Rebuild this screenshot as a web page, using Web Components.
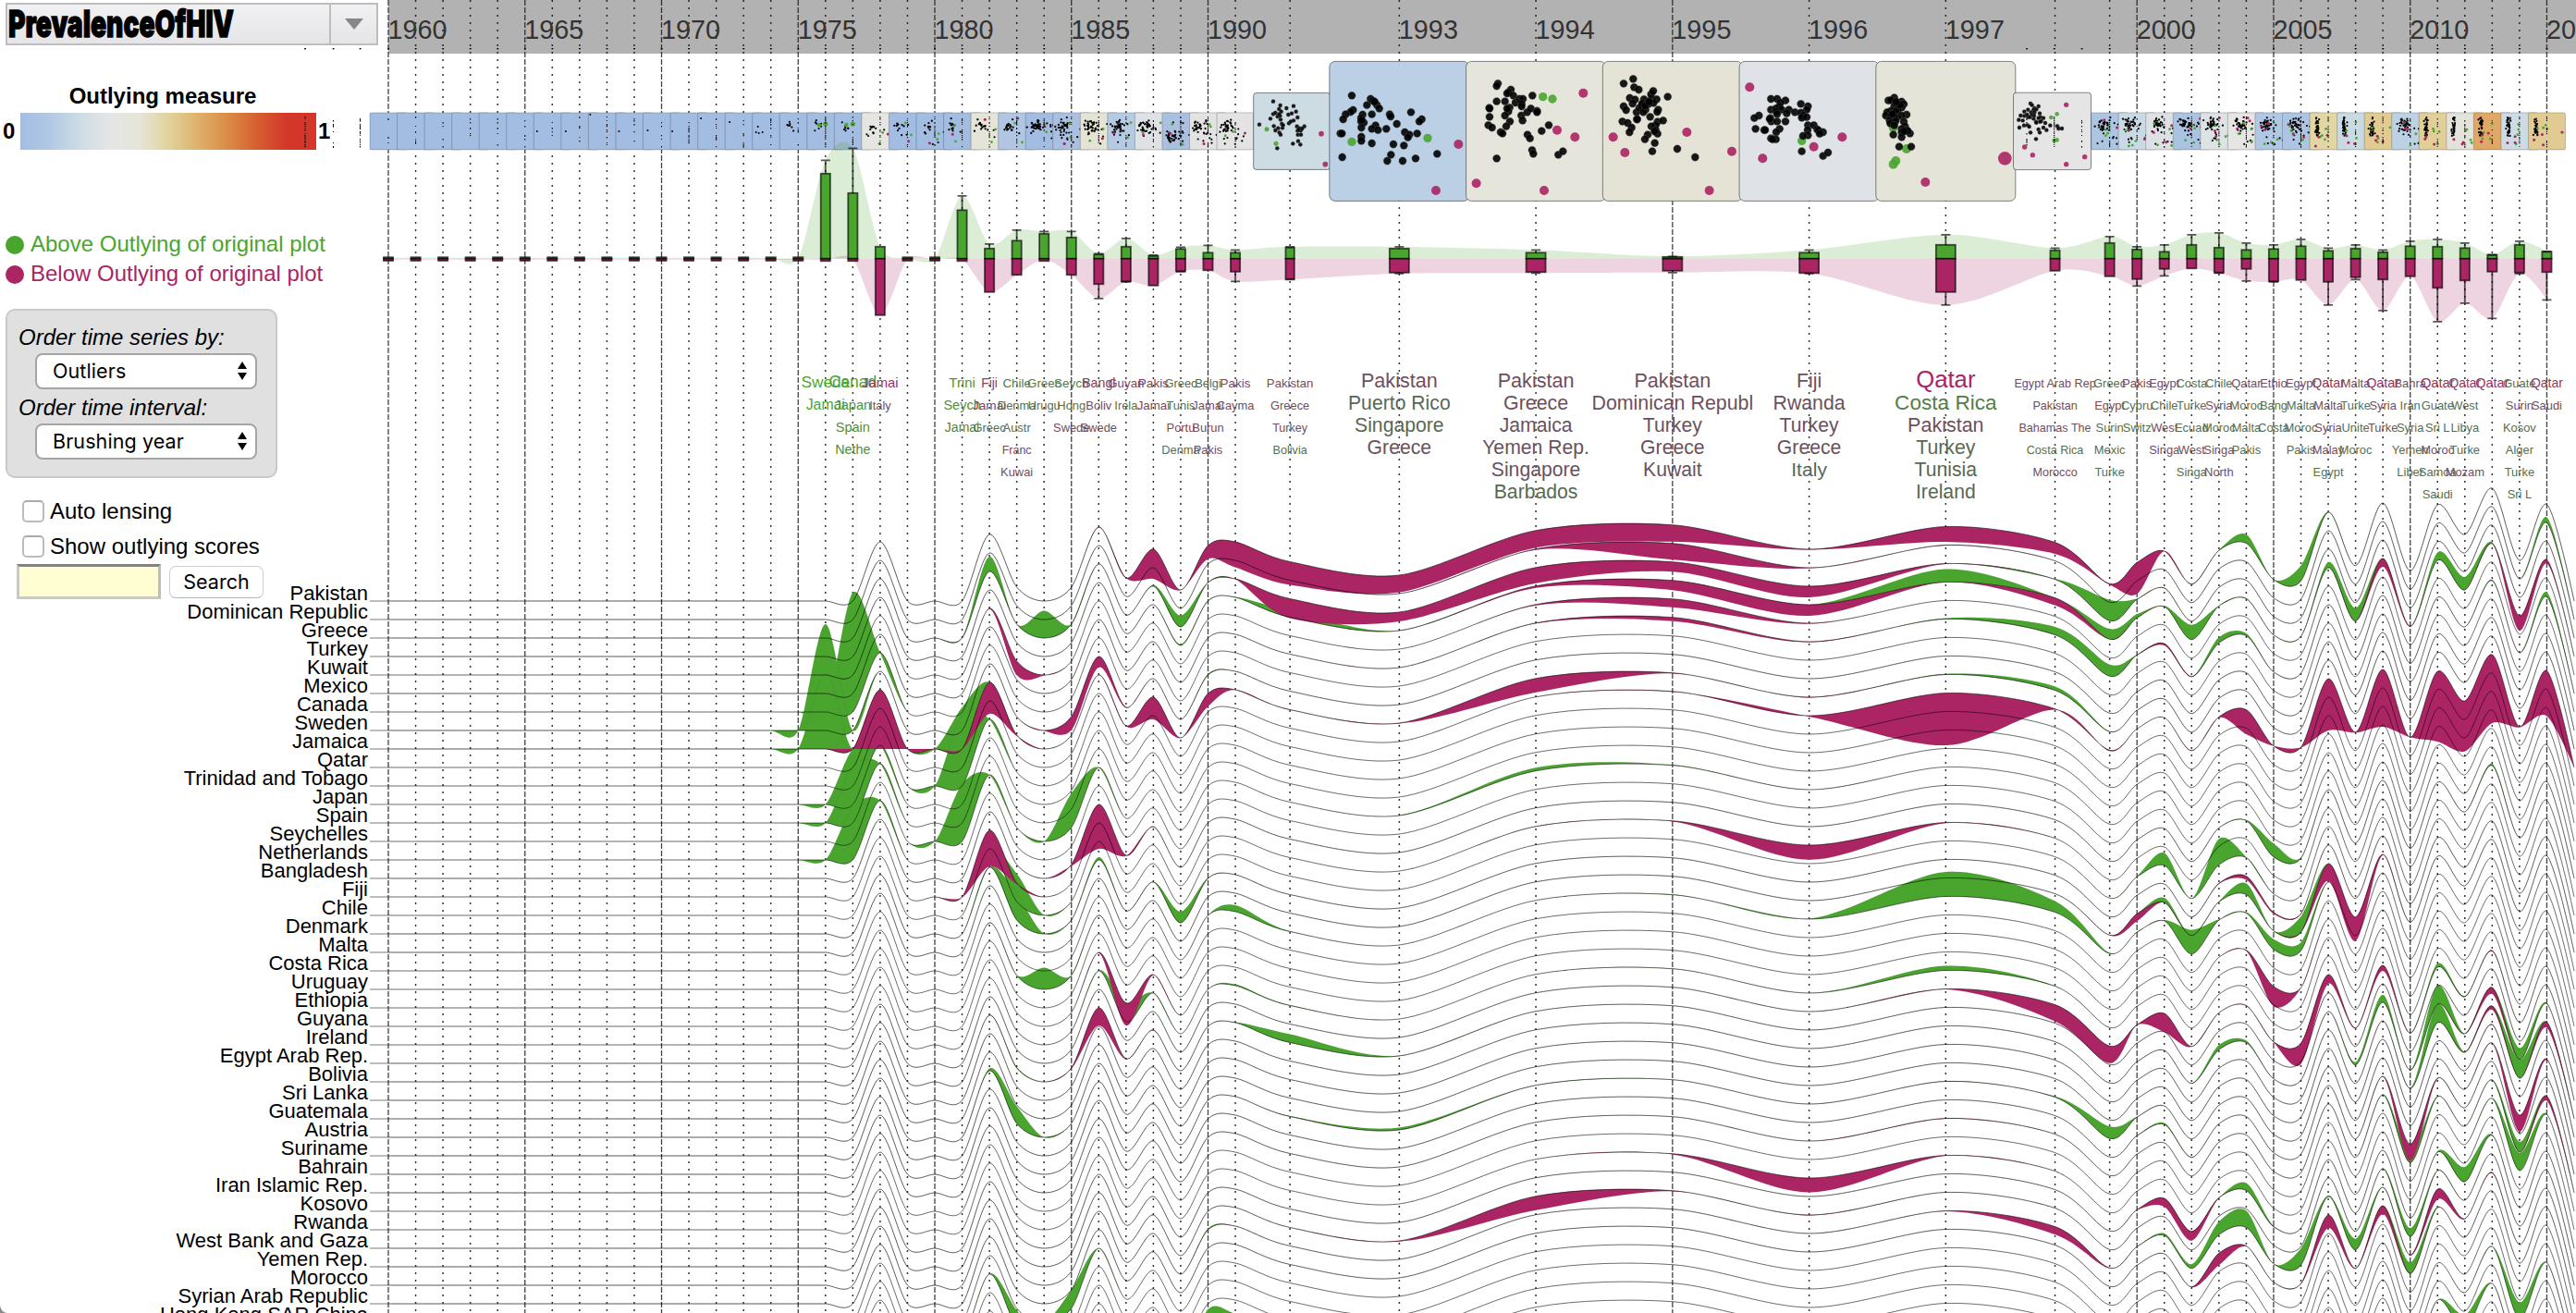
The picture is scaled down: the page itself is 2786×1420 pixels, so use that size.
<!DOCTYPE html>
<html lang="en">
<head>
<meta charset="utf-8">
<title>PrevalenceOfHIV</title>
<style>
html,body{margin:0;padding:0;background:#fff}
body{width:2786px;height:1420px;overflow:hidden;font-family:"Liberation Sans",Arial,sans-serif;color:#000}
</style>
</head>
<body>
<outlier-app></outlier-app>
<script>
const GREEN='#4aa52f', MAG='#ab2463';
const define=(name,css,html,init)=>{
  const t=document.createElement('template');
  t.innerHTML=`<style>:host{display:block;box-sizing:border-box}*{box-sizing:border-box}${css}</style>${html}`;
  customElements.define(name,class extends HTMLElement{
    constructor(){super();this.attachShadow({mode:'open'}).append(t.content.cloneNode(true));}
    connectedCallback(){if(init)init.call(this,this.shadowRoot);}
  });
};

/* ---------- side panel controls ---------- */
define('data-picker',`
:host{width:403px;height:46px}
.box{display:flex;height:46px;border:2px solid #bdbdbd;background:linear-gradient(#f1f1f3,#e5e5e7)}
.name{flex:1;overflow:visible}
.arrow{width:51px;border-left:2px solid #bdbdbd;display:flex;align-items:center;justify-content:center}
svg{display:block}`,
`<div class="box"><svg class="name" width="348" height="42"><text x="1" y="35.2" font-family="Inter,'Liberation Sans',sans-serif" font-weight="900" font-size="40" textLength="244" lengthAdjust="spacingAndGlyphs" stroke="#000" stroke-width="1.3">PrevalenceOfHIV</text></svg>
<div class="arrow"><svg width="22" height="14"><path d="M1 1H21L11 13Z" fill="#878787"/></svg></div></div>`);

define('color-legend',`
:host{font-weight:bold;font-size:24px;line-height:28px}
.t{width:352px;text-align:center}
.r{display:flex;align-items:center;height:40px;margin-top:4px}
.a{width:22px;padding-left:3px}
.b{width:320px;height:40px;background:linear-gradient(90deg,#a3bde2,#b2c9e4 10%,#ccdce4 20%,#e5e5e6 30%,#e5e5da 40%,#e2d39c 50%,#deb16c 60%,#da8c47 70%,#d65f31 80%,#d4372a 90%,#d4372a)}
.c{padding-left:2px}`,
`<div class="t"><slot></slot></div><div class="r"><span class="a">0</span><span class="b"></span><span class="c">1</span></div>`);

define('legend-item',`
:host{display:flex;align-items:center;height:32px;font-size:24px;line-height:28px}
i{width:20px;height:20px;border-radius:50%;background:currentColor;margin:0 7px 3px 6px}
span{margin-bottom:4px}`,
`<i></i><span><slot></slot></span>`);

define('select-field',`
:host{font-size:24px}
.l{font-style:italic;line-height:28px;padding-left:12px}
.s{margin:3px 0 0 30px;width:240px;height:39px;border:2px solid #a5a5a5;border-radius:8px;background:#fff;display:flex;align-items:center;justify-content:space-between;padding:0 9px 1px 17px;font-family:Inter,"Liberation Sans",sans-serif;font-size:21.5px;letter-spacing:.1px}`,
`<div class="l"><slot></slot></div><div class="s"><span class="v"></span><svg width="10" height="20"><path d="M5 0L10 8H0ZM5 20L10 12H0Z"/></svg></div>`,
function(r){r.querySelector('.v').textContent=this.getAttribute('value');});

define('option-panel',`
:host{width:294px;height:183px;border:2px solid #c9c9c9;border-radius:10px;background:#e0e0e0;padding-top:15px;display:flex;flex-direction:column;gap:6px}`,`<slot></slot>`);

define('check-option',`
:host{display:flex;align-items:center;height:28px;font-size:24px;line-height:28px;padding-left:24px;gap:6px}
i{width:24px;height:24px;border:2px solid #bcbcbc;border-top-color:#a9a9a9;border-radius:5px;background:#fff}`,`<i></i><slot></slot>`);

define('search-form',`
:host{display:flex;height:38px;padding-left:18px;gap:9px;align-items:center}
.i{width:156px;height:38px;background:#fffdd1;border:3px solid #c9c9c9;border-top-color:#828282;border-right-color:#bdbdbd}
.b{width:102px;height:35px;border:1.5px solid #cfcfcf;border-bottom-color:#b5b5b5;border-radius:7px;background:#fff;display:flex;align-items:center;justify-content:center;font-family:Inter,"Liberation Sans",sans-serif;font-size:21.5px}`,
`<div class="i"></div><div class="b">Search</div>`);

define('control-side',`
:host{display:flex;flex-direction:column;width:420px}
data-picker{margin:3px 0 0 6px}
color-legend{margin-top:41px}
.g{margin-top:88px}
option-panel{margin:20px 0 0 6px}
.c1{margin-top:22px}.c2{margin-top:10px}
search-form{margin-top:5px}`,
`<data-picker></data-picker><color-legend>Outlying measure</color-legend>
<legend-item class="g" style="color:${GREEN}">Above Outlying of original plot</legend-item>
<legend-item style="color:${MAG}">Below Outlying of original plot</legend-item>
<option-panel><select-field value="Outliers">Order time series by:</select-field><select-field value="Brushing year">Order time interval:</select-field></option-panel>
<check-option class="c1">Auto lensing</check-option><check-option class="c2">Show outlying scores</check-option>
<search-form></search-form>`);

/* ---------- shared scales and helpers ---------- */
const STEP=29.55, YEARS=[];
for(let y=1960;y<=2016;y++)YEARS.push(y);
const unit=y=>y<=1991?y-1960:({1992:33,1993:37,1994:42,1995:47,1996:52,1997:57,1998:61,1999:63})[y]??y-1936;
const X=y=>420+STEP*unit(y);
const f=n=>n.toFixed(2);
/* cardinal spline, tension 0.7 */
const spline=p=>{
  const n=p.length,t=p.map((q,i)=>{const a=p[Math.max(0,i-1)],b=p[Math.min(n-1,i+1)];return i==0||i==n-1?[0,0]:[.15*(b[0]-a[0]),.15*(b[1]-a[1])];});
  let s='';
  for(let i=1;i<n;i++)s+=`C${f(p[i-1][0]+t[i-1][0])},${f(p[i-1][1]+t[i-1][1])} ${f(p[i][0]-t[i][0])},${f(p[i][1]-t[i][1])} ${f(p[i][0])},${f(p[i][1])}`;
  return s;
};
const line=p=>`M${f(p[0][0])},${f(p[0][1])}`+spline(p);
const area=(a,b)=>{const r=b.slice().reverse();return line(a)+`L${f(r[0][0])},${f(r[0][1])}`+spline(r)+'Z';};
let seed=11;
const rnd=()=>{seed=(seed*16807)%2147483647;return seed/2147483647;};
const gauss=()=>(rnd()+rnd()+rnd()+rnd()-2)*1.2;

/* ---------- axis and grid ---------- */
const axis=()=>{
  let s='<rect x="420" y="0" width="2366" height="58" fill="#b2b2b2"/>';
  for(const y of YEARS){
    if(y==2016)continue;
    s+=y%5==0?`<path d="M${f(X(y))} 0V1420" stroke="#111" stroke-width="1.3" stroke-dasharray="6 2" stroke-opacity=".8"/>`
            :`<path d="M${f(X(y))} 0V1420" stroke="#000" stroke-width="1.5" stroke-dasharray="2 6" stroke-opacity=".8"/>`;
  }
  for(const y of [1960,1965,1970,1975,1980,1985,1990,1993,1994,1995,1996,1997,2000,2005,2010,2015])
    s+=`<text x="${f(X(y)-.5)}" y="41.6" font-size="28.8" fill="#333">${y}</text>`;
  return s;
};

/* ---------- thumbnail strip ---------- */
const B='#a3bce2';
const FILL={1978:'#e5e5e2',1982:'#e5e4d8',1983:'#b0c6e2',1985:'#a9c0e2',1986:'#e5e4d4',1987:'#b5cae3',1988:'#dfe2e5',1989:'#aac0e0',1990:'#e3e3e3',1991:'#e3e3e3',1992:'#cddbe3',1993:'#bbd0e4',1994:'#e5e5dc',1995:'#e5e3d5',1996:'#dfe3e7',1997:'#e4e4d9',1998:'#e5e5e5',1999:'#aec5e2',2000:'#cadae5',2001:'#dde1e5',2002:'#aac3e2',2003:'#dde2e4',2004:'#e5e5e3',2005:'#b0c8e4',2006:'#acc5e3',2007:'#e2d6a5',2008:'#cadae3',2009:'#e1cb92',2010:'#bcd1e3',2011:'#e2ce97',2012:'#e3e3dc',2013:'#dfa866',2014:'#cddbe5',2015:'#e1cb92'};
/* lens thumbnails: [origin x, black radius, accent radius, black, green, magenta] in thirds of a pixel */
const LENS={
1992:[1350,6.5,8.5,'81,149 104,162 124,171 147,164 155,182 81,190 88,186 100,174 107,182 72,205 95,198 105,208 130,192 141,188 160,201 103,196 36,224 83,229 109,222 97,236 111,235 88,243 101,250 105,257 132,220 147,211 158,230 166,236 182,230 160,244 170,244 161,257 171,257 162,278 169,289 145,286 94,301 138,214 113,226 100,190 164,240 175,237','60,239 90,286','237,254 250,353'],
1993:[1350,12.5,15,'336,130 397,141 404,147 385,161 417,160 425,172 340,177 332,183 316,191 308,207 371,192 366,203 366,214 375,218 367,234 401,191 459,191 462,198 528,184 563,207 555,214 482,222 413,227 401,238 421,242 448,238 299,253 304,253 508,249 523,257 518,266 548,253 367,264 367,277 401,285 471,288 505,292 305,330 463,322 451,342 501,342 543,334 613,319 410,150 368,210','336,280 582,268','682,288 609,438'],
1994:[1350,12.5,15,'810,91 806,99 852,111 845,119 840,123 860,130 806,149 833,149 867,153 880,141 891,141 887,157 887,165 922,130 782,170 783,172 848,169 844,182 840,172 833,195 783,199 849,214 837,230 886,195 890,211 905,184 917,172 937,180 937,184 779,226 791,234 819,249 825,253 906,257 914,269 952,245 975,226 921,307 925,319 1006,322 1021,311 806,334','956,134 987,141','1087,122 1002,242 1060,265 740,415 960,438'],
1995:[1350,12.5,15,'1249,76 1218,91 1252,103 1267,111 1238,138 1255,143 1218,165 1226,177 1247,156 1260,184 1214,214 1231,219 1244,234 1237,249 1261,207 1269,170 1284,142 1276,165 1289,176 1298,158 1308,142 1307,126 1314,115 1325,142 1315,154 1361,134 1282,184 1304,199 1330,176 1327,183 1262,207 1328,215 1346,211 1322,226 1308,230 1322,242 1328,254 1296,257 1287,272 1319,284 1311,311 1392,303 1450,330 1278,156 1288,163 1300,150 1318,246','','1184,265 1222,315 1423,249 1569,311 1496,438'],
1996:[1770,12.5,15,'436,141 456,141 483,146 467,153 463,165 436,176 452,172 471,176 453,182 494,176 487,188 456,190 434,203 437,214 432,206 456,214 483,214 397,195 382,203 386,238 414,242 417,242 464,238 453,249 436,269 452,272 441,272 533,157 556,165 552,176 514,184 533,186 540,195 536,202 552,200 556,226 575,226 555,242 586,240 590,243 605,249 594,254 556,259 540,261 536,311 605,326 621,315','536,277','367,103 667,265 575,296 409,334'],
1997:[1770,12.5,15,'836,137 817,146 825,145 860,150 848,157 867,158 836,165 860,169 848,176 825,180 840,183 813,184 809,195 825,196 836,203 844,203 876,192 860,195 821,211 840,214 823,220 836,227 867,215 871,230 860,238 860,249 876,242 887,253 833,257 860,265 852,296 891,296 880,245 868,246 830,190 855,160 842,150','833,234 876,303 841,342 833,353','937,411 1195,334'],
1998:[1770,6.5,8,'1278,156 1283,161 1304,165 1291,171 1288,176 1270,176 1280,184 1297,175 1258,182 1246,195 1258,196 1270,200 1291,184 1308,188 1310,200 1304,203 1240,209 1253,211 1288,205 1296,215 1297,218 1320,203 1313,213 1309,215 1282,192 1267,192 1242,234 1257,227 1268,226 1274,231 1278,250 1326,219 1320,234 1304,240 1330,242 1342,227 1365,229 1369,237 1380,237 1308,250 1296,271 1276,200 1290,195','1345,201 1364,190 1355,276 1364,274','1394,160 1259,297 1285,323 1394,353 1454,329']
};
const strip=()=>{
  let s='';
  const col=(x,dense,w=1.1)=>{
    let o='';
    for(let y=126;y<160;y+=2)if(rnd()<dense)o+=`<rect x="${f(x-w/2)}" y="${y}" width="${w}" height="${f(.8+rnd()*1.2)}" fill="#000"/>`;
    return o+`<rect x="${f(x-.8)}" y="52" width="1.8" height="1.4" fill="#000"/>`;
  };
  s+=col(330,.75)+col(360.5,.5)+col(389.5,.7);
  for(const y of YEARS){
    if(y==2016)continue;
    let w=40,x=X(y)-20;
    const L=LENS[y];
    if(y==1992){w=83;x=1355.7}
    else if(y==1998)continue;
    else if(L){w=151;x=X(y)-75.5}
    s+=`<rect x="${f(x)}" y="${f(141.9-w/2)}" width="${w}" height="${w}" rx="${w>100?6:w>50?3:1.5}" fill="${FILL[y]||B}" stroke="#222" stroke-opacity="${w>50?.55:.5}" stroke-width="${w>50?1:.5}"/>`;
    if(L)s+=dots(L);
    else s+=mini(y,x);
    if(!L)s+=col(X(y),y<1966?.3:y<1975?.45:.6);
  }
  /* 1998 sits over its neighbour on the left */
  s+=`<rect x="2177.5" y="100.2" width="84" height="83.4" rx="3" fill="${FILL[1998]}" stroke="#222" stroke-opacity=".55"/>`+col(2192,.35)+col(2251.5,.6)+dots(LENS[1998])+col(2221.7,1);
  return s;
};
const dots=L=>{
  let s='';
  const put=(list,r,c,o)=>list&&list.split(' ').forEach(p=>{const[a,b]=p.split(',');const R=a=='1195'?22:(a=='876'||a=='841'||a=='833')&&c==GREEN?15:r;
    s+=`<circle cx="${f(L[0]+a/3)}" cy="${f(60+b/3)}" r="${f(R/3)}" fill="${c}" fill-opacity="${o}"${c=='#000'?' stroke="#777" stroke-width=".3"':''}/>`;});
  put(L[4],L[2]-1,GREEN,.9);put(L[3],L[1],'#000',.9);put(L[5],L[2],MAG,.9);
  return s;
};
const mini=(y,x)=>{
  let s='';
  const d=(a,b,r,c)=>s+=`<circle cx="${f(x+Math.max(1.5,Math.min(38,a)))}" cy="${f(122+Math.max(2,Math.min(38,b)))}" r="${r}" fill="${c}"/>`;
  if(y<1966)return s;
  if(y<1975){d(2+(y%3)*1.5+(y>1973?4:0),y<1972?[20,20,2,20,19,20][y-1966]:[6,10,15][y-1972],1,'#000');if(y>1973){d(4,21,1,'#000');d(7,22,1,'#000');d(11,21,1,'#000');}return s;}
  if(y==1975||y==1976||y==1977){for(let i=0;i<7;i++)d(8+rnd()*8,8+rnd()*12,1.1,'#000');if(y>1975){d(13,13,2.2,GREEN);d(20,12,2.6,GREEN);}return s;}
  const late=y>=2007&&y!=2010;
  const n=y<1982?12:y<1984?18:late?32:40;
  for(let i=0;i<n;i++){
    if(late)d(8+gauss()*1.7,5+rnd()*20,1.1,'#000');
    else if(i<n*.75)d((y<1999?11:13)+gauss()*5,(y==1989?26:y<1999?15:12)+gauss()*5,1.15,'#000');
    else d(6+rnd()*24,10+rnd()*24,1.1,'#000');
  }
  for(let i=0;i<(y<1999?2:4);i++)d(8+rnd()*20,10+rnd()*26,1.4,GREEN);
  for(let i=0;i<(y<1999?1:3);i++)d(6+rnd()*(late?14:26),late?22+rnd()*14:4+rnd()*30,1.5,MAG);
  if(y==2015)d(36.5,21,1.6,MAG);
  return s;
};

/* ---------- box plots: green box, green whisker, magenta box, magenta whisker ---------- */
const BOX={1976:[92,106.5,2.5,2.5],1977:[71,119.5,2.5,2.5],1978:[13,13,61,61],1981:[52.5,68,2.5,2.5],1982:[11,16,36,36],1983:[19.5,31,17.5,17.5],1984:[27,29.5,2.5,2.5],1985:[23,29.5,17.5,17.5],1986:[4.5,5.5,27.5,43],1987:[13,22,24.5,25],1988:[3,4,29,29],1989:[10.5,12.5,13.5,14],1990:[6.5,14.5,12.5,12.5],1991:[6.5,9.5,14,24.5],1992:[12,13,22,22.5],1993:[11,13,15,16],1994:[6.5,9.5,14.5,15.5],1995:[2,2.5,13,15],1996:[6.5,9.5,15.5,16],1997:[15,26,36,50],1998:[9,11.5,13,13],1999:[17,24,19,19],2000:[10,13,22,29.5],2001:[7.5,15,11,18.5],2002:[15,26,10.5,10.5],2003:[12,28,15,15.5],2004:[9.5,17,11,24],2005:[10.5,15,24.5,25],2006:[13.5,21,23,23],2007:[8.5,11.5,25,50],2008:[11,15,20,22.5],2009:[7,9.5,22.5,56],2010:[13.5,19,19,19],2011:[13,21,31.5,68],2012:[11.5,17,23.5,48],2013:[4,4.5,14,64.5],2014:[15,19,15,16],2015:[7.5,8,14.5,44.5]};
const boxes=()=>{
  const Y=279.8,ys=YEARS.slice(0,-1),z=ys.map(y=>[X(y),Y]);
  const up=ys.map(y=>[X(y),Y-(BOX[y]?BOX[y][1]:1)]);
  const dn=ys.map(y=>{const v=BOX[y]?BOX[y][3]:1;return[X(y),Y+(v<=2.5?1:v)];});
  let s=`<path d="${area(up,z)}" fill="${GREEN}" fill-opacity=".2"/><path d="${area(dn,z)}" fill="${MAG}" fill-opacity=".2"/>`;
  for(const y of ys){
    const b=BOX[y]||[1.6,1.6,2.2,2.2],x=X(y),w=y>1992&&y<1998?21:y==1992?9.4:10.2,st='stroke="#000" stroke-opacity=".65" stroke-width="1.8"';
    s+=`<rect x="${f(x-w/2)}" y="${f(Y-b[0])}" width="${w}" height="${b[0]}" fill="${GREEN}" ${st}/><rect x="${f(x-w/2)}" y="${Y}" width="${w}" height="${b[2]}" fill="${MAG}" ${st}/>`;
    if(b[1]>b[0])s+=`<path d="M${f(x)} ${f(Y-b[0])}V${f(Y-b[1])}M${f(x-5)} ${f(Y-b[1])}h10" fill="none" ${st}/>`;
    if(b[3]>b[2])s+=`<path d="M${f(x)} ${f(Y+b[2])}V${f(Y+b[3])}M${f(x-5)} ${f(Y+b[3])}h10" fill="none" ${st}/>`;
  }
  return s;
};

/* ---------- ranked names per year; prefix gives direction, suffix gives size ---------- */
const NAMES={
1976:'+Swede@17.3,+Jamai@15.8',1977:'+Canad@17.5,+Japan@14.6,+Spain@14.5,+Nethe@14.3',1978:'-Jamai@14.8,-Italy@12.8',
1981:'+Trini@14.9,+Seych@14.5,+Jamai@14',1982:'-Fiji@13.8,-Jamai@13.6,+Greec',1983:'+Chile@13.3,+Denma,+Austr,-Franc@12.5,-Kuwai',1984:'+Greec@13.3,+Urugu',1985:'+Seych@13.5,+Hong,-Swede',1986:'-Bangl@14.2,-Boliv,-Swede',1987:'-Guyan@13.3,+Irela',1988:'-Pakis@13.6,-Jamai@13.3',1989:'+Greec,+Tunis,-Portu,+Denma',1990:'+Belgi,-Jamai,-Burun,-Pakis',1991:'-Pakis@13.5,-Cayma',
1992:'-Pakistan@13.2,-Greece,-Turkey@12.6,+Bolivia@12.6',
1993:'-Pakistan@21.6,+Puerto Rico@21.2,+Singapore@21.2,-Greece@21.2',
1994:'-Pakistan@21.6,-Greece@21.4,-Jamaica@21.2,-Yemen Rep.@21.2,-Singapore@21.2,+Barbados@21.2',
1995:'-Pakistan@21.6,-Dominican Republ@21.4,-Turkey@21.2,-Greece@21.2,-Kuwait@21.2',
1996:'-Fiji@21.4,-Rwanda@21.3,-Turkey@21.2,-Greece@21.2,+Italy@21.1',
1997:'-Qatar@25.7,+Costa Rica@22.6,-Pakistan@21.5,+Turkey@21.3,+Tunisia@21.2,+Ireland@21.2',
1998:'-Egypt Arab Rep@12.6,-Pakistan@12.6,-Bahamas The@12.6,+Costa Rica@12.6,-Morocco@12.6',
1999:'+Greec,-Egypt,+Surin,+Mexic,+Turke',2000:'-Pakis@13.3,+Cypru,+Switz',2001:'-Egypt,+Chile,-West,-Singa',2002:'+Costa,+Turke,+Ecuad,-West,+Singa',2003:'+Chile,-Syria,+Moroc,-Singa,-North',2004:'-Qatar,+Moroc,+Malta,+Pakis',2005:'-Ethio,+Bang,+Costa',2006:'-Egypt,+Malta,+Moroc,+Pakis',
2007:'-Qatar@14.2,-Malta,-Syria,-Malay,+Egypt',2008:'-Malta,+Turke,+Unite,+Moroc',2009:'-Qatar@14.4,-Syria,-Turke',2010:'-Bahra,+Iran,+Syria,+Yemen,+Liber',2011:'-Qatar@14.7,+Guate,+Sri L,-Moroc,+Samoa,+Saudi',2012:'-Qatar@13.8,+West,+Libya,+Turke,-Mozam',2013:'-Qatar@14.5',2014:'+Guate,-Surin,+Kosov,+Alger,+Turke,+Sri L',2015:'-Qatar@13.9,-Saudi'};
const names=()=>{
  let s='';
  for(const y in NAMES)NAMES[y].split(',').forEach((n,i)=>{
    const[t,z='12.9']=n.slice(1).split('@'),size=+z;
    const k=size>20?Math.min(1,.15+(size-21.1)*.2):Math.min(1,.22+Math.max(0,size-12.8)*.27);
    const c=n[0]=='+'?[74,165,47]:[171,36,99];
    s+=`<text x="${f(X(+y))}" y="${f(419.3+24*i)}" font-size="${size}" text-anchor="middle" fill="rgb(${c.map(v=>Math.round(92+(v-92)*k)).join()})">${t}</text>`;
  });
  return s;
};

/* ---------- streams ---------- */
const BASE={1978:64,1982:72,1983:15,1985:15,1986:80,1987:25,1988:56,1989:12,1990:60,1991:64,1992:42.5,1993:28,1994:76.3,1995:82.3,1996:56,1997:80.5,1998:63.4,1999:18.7,2000:41.7,2001:54,2002:18.3,2003:54.7,2004:62.5,2005:23.3,2006:21.8,2007:96,2008:38.3,2009:106,2010:32.7,2011:104,2012:72,2013:122,2014:44,2015:104.5};
/* deviation of each country's own score from the overall one, per year */
const DEV=[
'88:-32,90:-14.5,91:-27.5,92:-25,93:-18.5,94:-18.5,95:-18,96:-.5,97:-16.5,98:-12.3,99:-1,100:-34,102:-.5,103:.5,104:9.5,106:16.5,107:.6,86:-.6',
'94:-1,95:-17.5,96:-.6,97:-.5,115:6,114:.3',
'81:.3,82:16,84:29.5,88:1.2,89:12.3,91:-.5,92:-21,93:-10,94:-17,95:-10.5,96:-12,97:-.6,98:.5,99:22.5,100:.8,101:.6',
'89:1.2,90:.5,91:.5,92:7,94:-2,95:-10.5,96:-12,97:14,98:-8,99:11,100:4,101:.8,102:16,104:.6,107:6,108:14,109:-9,110:-.4,111:8.5,112:14,113:1.5,114:-16,115:-4',
'82:-.7,83:-15,84:-.5,94:-1,95:-9,96:-.6',
'94:-.6,95:-4,96:-.5,97:1,98:8.5,99:12.5,101:-2,102:-.5,103:6,104:2.5,113:1,115:5,114:.3',
'77:129','76:115,84:-.3,85:-14.5,86:-11.5,87:-.6,90:1.2',
'76:82,78:-64,81:45,82:-34,83:-1,87:-.3,88:-24,90:-14,92:-.3,93:-.5,94:-15,95:-.7,96:-.4,97:.7,98:4,99:.4',
'95:-.6,96:-1,97:-56.5,98:-.8,99:-1,102:-.5,103:-.7,104:-26.5,106:-.3,107:-56,108:-.6,109:-62,111:-76,112:-54.5,113:-74,114:-.6,115:-49',
'81:77','77:60','77:60','81:62,83:.3,85:37,93:.3,94:3.5,95:.6','77:57','85:-1.5,86:-48,87:-.7,88:-.6,104:.7,105:14.5,106:.6,113:2',
'81:-.4,82:-39,83:-1,94:-.3,95:-.7,96:-15.7,97:-.7',
'83:30,84:.4,100:.6,101:13.5,103:28,104:.6','83:28,84:.4,86:3,88:.3,89:12,90:.7,103:-.6,104:-4,105:-1.5,106:-.5',
'99:-.3,100:-8,101:5,103:.5,104:12,106:17,107:-18.5,108:-26,109:-.7',
'91:7,92:.4,95:.5,96:.6,97:26.5,98:12,99:.7,100:.6,101:.9,102:26,103:1,104:1,105:11,106:9','82:.4,83:.4,84:23.5,86:.4','104:-1,105:-21.5,106:-.4',
'86:-.7,87:-24,88:-.5','83:.3,86:.3,87:20.7,91:1.5,92:.4,95:.3,97:5,98:.4',
'97:-.6,98:-18,99:-18.5,100:-.4,101:-20,102:-.4,104:-.4,105:-.6,106:-22.5,107:-10,108:-.6,109:-6,111:4,112:1,113:-1',
'82:.3,83:1,85:-.7,86:-19,87:-.5,88:-.5,91:.5,92:9,93:.3',
'102:.3,103:5,104:2,108:3,109:8,111:20,113:-7,114:12.5,115:1','110:.5,111:20,112:.3,113:-4,114:19.5,115:-6',
'81:.3,82:2.5,83:18.5,113:-.6','92:.5,93:2.5,97:.3,98:.8,99:13,100:.6,113:-.3,114:-18,115:-1',
'100:.3,101:1.5,102:.4,109:-.6,110:-18,111:-.8','97:-.5,109:.6,110:12,111:.5,113:.4,114:11,115:-5','114:19,115:.8,113:.4',
'95:-.7,96:-15.5,97:-.6','100:-.5,101:-9,102:-10,103:-.4,104:8,105:1,111:1,112:16,113:1','93:-.7,94:-15,95:-.7,96:-.4,108:.3,109:.6,110:9',
'90:1.3,97:-.6,98:-8.5,99:-.5,101:2,102:4.5,103:14,104:18,106:18,107:1,108:12,110:-.5,111:-11,112:-.5,113:-1','102:-.5,103:-13,104:-.6,106:-.6,107:-14,108:-.5,109:-9,110:12,111:1','85:20',
'82:.3,83:18','112:.3,114:17.5','90:14,91:5','112:16','',''];
const COUNTRIES='Pakistan,Dominican Republic,Greece,Turkey,Kuwait,Mexico,Canada,Sweden,Jamaica,Qatar,Trinidad and Tobago,Japan,Spain,Seychelles,Netherlands,Bangladesh,Fiji,Chile,Denmark,Malta,Costa Rica,Uruguay,Ethiopia,Guyana,Ireland,Egypt Arab Rep.,Bolivia,Sri Lanka,Guatemala,Austria,Suriname,Bahrain,Iran Islamic Rep.,Kosovo,Rwanda,West Bank and Gaza,Yemen Rep.,Morocco,Syrian Arab Republic,Hong Kong SAR China'.split(',');
const streams=()=>{
  let g='',m='',l='',t='';
  for(let r=0;r<50;r++){
    const y0=650+20*r,pts=YEARS.map(y=>[X(y),y0-(BASE[y]||0)]);
    l+=`<path d="M400,${y0}L${line(pts).slice(1)}"/>`;
    if(!DEV[r])continue;
    const d={};
    DEV[r].split(',').forEach(p=>{const[a,b]=p.split(':');d[1900+ +a]=+b;});
    for(const sign of [1,-1]){
      if(!Object.values(d).some(v=>v*sign>0))continue;
      const e=YEARS.map((y,i)=>[pts[i][0],pts[i][1]-((d[y]||0)*sign>0?d[y]:0)]);
      const p=`<path d="${area(pts,e)}"/>`;
      if(sign>0)g+=p;else m+=p;
    }
  }
  COUNTRIES.forEach((c,i)=>t+=`<text x="398" y="${648.6+20*i}" font-size="22" text-anchor="end">${c}</text>`);
  return `<g fill="${GREEN}" stroke="#000" stroke-opacity=".12" stroke-width=".4">${g}</g><g fill="${MAG}" stroke="#000" stroke-opacity=".12" stroke-width=".4">${m}</g><g fill="none" stroke="#000" stroke-opacity=".55" stroke-width=".95">${l}</g>${t}`;
};

const layer=(name,draw)=>define(name,`svg{display:block}`,`<svg xmlns="http://www.w3.org/2000/svg" width="2786" height="1420" viewBox="0 0 2786 1420">${draw()}</svg>`);
layer('year-axis',axis);
layer('thumb-strip',strip);
layer('box-plots',boxes);
layer('ranked-names',names);
layer('country-streams',streams);

define('outlier-app',`
:host{display:grid;width:2786px;height:1420px;overflow:hidden}
:host>*{grid-area:1/1}
year-axis,control-side,thumb-strip,box-plots,ranked-names,country-streams{grid-area:1/1}
.corner{grid-area:1/1;align-self:end;justify-self:start;display:block}`,
`<year-axis></year-axis><control-side></control-side><thumb-strip></thumb-strip><box-plots></box-plots><ranked-names></ranked-names><country-streams></country-streams>
<svg class="corner" width="10" height="10"><path d="M0 2Q1 9 8 10H0Z" fill="#8a8a8a"/></svg>`);
</script>
</body>
</html>
